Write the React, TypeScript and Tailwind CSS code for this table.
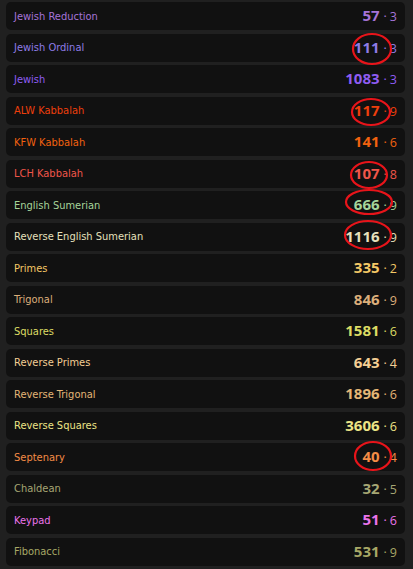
const rows = [
  { name: "Jewish Reduction", value: 57, digit: 3, color: "text-[#a674d8]" },
  { name: "Jewish Ordinal", value: 111, digit: 3, color: "text-[#8f7ce6]" },
  { name: "Jewish", value: 1083, digit: 3, color: "text-[#8f5cf2]" },
  { name: "ALW Kabbalah", value: 117, digit: 9, color: "text-[#ee3f0c]" },
  { name: "KFW Kabbalah", value: 141, digit: 6, color: "text-[#f2620f]" },
  { name: "LCH Kabbalah", value: 107, digit: 8, color: "text-[#f0564a]" },
  { name: "English Sumerian", value: 666, digit: 9, color: "text-[#a6d49a]" },
  { name: "Reverse English Sumerian", value: 1116, digit: 9, color: "text-[#e6e0bc]" },
  { name: "Primes", value: 335, digit: 2, color: "text-[#f4c866]" },
  { name: "Trigonal", value: 846, digit: 9, color: "text-[#dcae7a]" },
  { name: "Squares", value: 1581, digit: 6, color: "text-[#dcdc64]" },
  { name: "Reverse Primes", value: 643, digit: 4, color: "text-[#f4ce94]" },
  { name: "Reverse Trigonal", value: 1896, digit: 6, color: "text-[#e4b676]" },
  { name: "Reverse Squares", value: 3606, digit: 6, color: "text-[#ece486]" },
  { name: "Septenary", value: 40, digit: 4, color: "text-[#f48c46]" },
  { name: "Chaldean", value: 32, digit: 5, color: "text-[#a6a674]" },
  { name: "Keypad", value: 51, digit: 6, color: "text-[#ea74ea]" },
  { name: "Fibonacci", value: 531, digit: 9, color: "text-[#a8a866]" },
];

// hand-drawn red circles over some of the totals
const marks = [
  { cx: 372, cy: 49, rx: 19, ry: 15 },
  { cx: 371, cy: 112, rx: 19, ry: 13 },
  { cx: 369, cy: 175, rx: 18, ry: 13 },
  { cx: 369, cy: 202, rx: 23, ry: 12 },
  { cx: 368, cy: 235, rx: 23, ry: 14 },
  { cx: 373, cy: 456, rx: 18, ry: 14 },
];

export default function App() {
  return (
    <div className="relative w-[413px] h-[569px] bg-[#202020] overflow-hidden">
      <div className="flex flex-col gap-[3.5px] pt-[2px] pl-[6px] pr-[8px]">
        {rows.map((row) => (
          <div
            key={row.name}
            className="h-[28px] shrink-0 rounded-[5px] bg-[#111111] flex items-center justify-between pl-[8px] pr-[8px]"
          >
            <span className={`${row.color} text-[11px] font-['DejaVu_Sans_Condensed',sans-serif] leading-none`}>
              {row.name}
            </span>
            <span className={`${row.color} flex items-baseline font-['Open_Sans',sans-serif] leading-none`}>
              <span className="text-[15px] font-bold">{row.value}</span>
              <span className="text-[12.5px] ml-[4px]">·</span>
              <span className="text-[12.5px] ml-[3px]">{row.digit}</span>
            </span>
          </div>
        ))}
      </div>
      <svg className="absolute inset-0 pointer-events-none" width="413" height="569">
        {marks.map((m, i) => (
          <ellipse
            key={i}
            cx={m.cx}
            cy={m.cy}
            rx={m.rx}
            ry={m.ry}
            fill="none"
            stroke="#e8141a"
            strokeWidth="2.2"
          />
        ))}
      </svg>
    </div>
  );
}
